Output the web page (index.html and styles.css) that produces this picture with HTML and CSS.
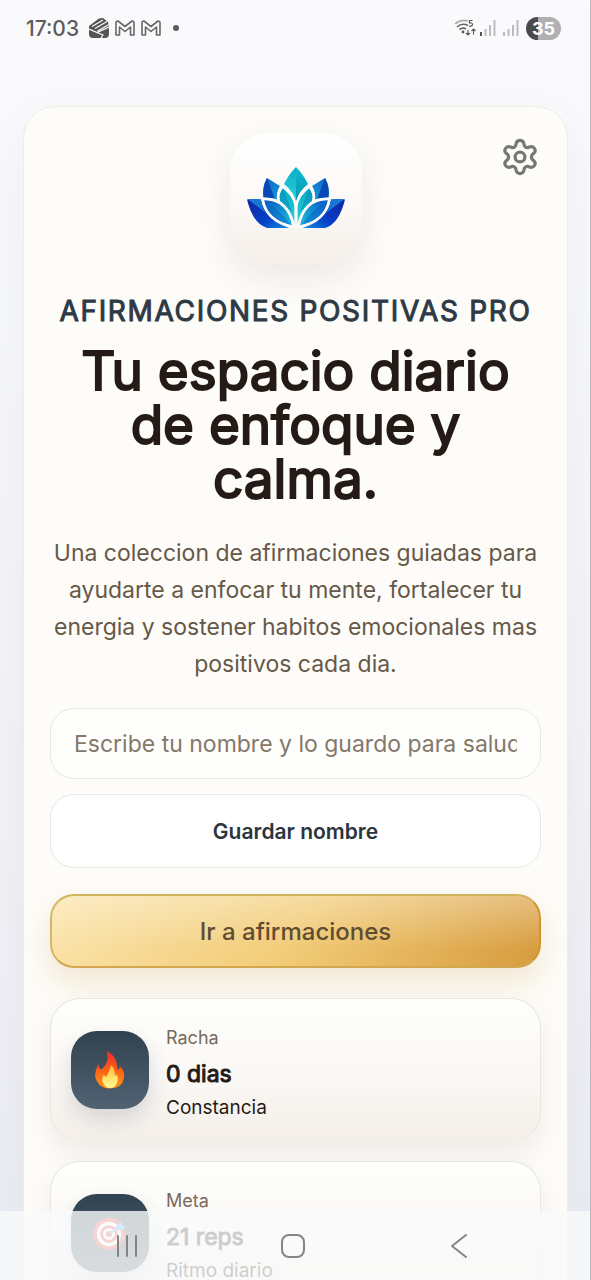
FILE: index.html
```html
<!DOCTYPE html>
<html lang="es">
<head>
<meta charset="utf-8">
<meta name="viewport" content="width=device-width, initial-scale=1">
<title>Afirmaciones Positivas Pro</title>
<link rel="stylesheet" href="styles.css">
</head>
<body>
<div class="screen">
  <header class="status">
    <div class="status-left">
      <span class="clock">17:03</span>
      <svg class="status-app" viewBox="0 0 20 20" width="20" height="20" aria-hidden="true">
        <path fill="#555" d="M0 8 10 0.500 14 0 19 4 20 8V16Q20 20 16 20H4Q0 20 0 16Z"/>
        <path fill="none" stroke="#fafafc" stroke-width="1.200" d="M3 8.500 14 2M6 10.500 18 3.500M8.500 13 20 6.500M0 11 8 14.500 20 9M8 14.500 14 17 12 20"/>
      </svg>
      <svg viewBox="0 0 20 16" width="20" height="16" aria-hidden="true"><path class="mail" d="M1 15V3Q1 1 3 1L10 6.500 17 1Q19 1 19 3V15H15.500V7L10 11.500 4.500 7V15Z"/></svg>
      <svg viewBox="0 0 20 16" width="20" height="16" aria-hidden="true"><path class="mail" d="M1 15V3Q1 1 3 1L10 6.500 17 1Q19 1 19 3V15H15.500V7L10 11.500 4.500 7V15Z"/></svg>
      <span class="dot"></span>
    </div>
    <div class="status-right">
      <svg class="wifi" viewBox="0 0 22 18" width="22" height="18" aria-hidden="true">
        <path fill="none" stroke="#aaa" stroke-width="1.600" d="M1 5Q7 0 14 2"/>
        <path fill="none" stroke="#666" stroke-width="1.600" d="M3 8Q8 3.500 14 6.500M5.500 10.500Q9 8 12 10"/>
        <circle cx="9" cy="13" r="1.400" fill="#555"/>
        <path fill="none" stroke="#555" stroke-width="1.100" d="M18.500 1.500H15.500V4Q18.500 3.500 18.500 5.500T15 7M14 11V16M12 14 14 16 16 14M19.500 15.500V10M17.500 12 19.500 10 21.500 12"/>
      </svg>
      <svg viewBox="0 0 16 16" width="16" height="16" aria-hidden="true"><path fill="#555" d="M0 12h2v4H0z"/><path fill="#bcbcbe" d="M4.500 9h2v7h-2zM9 5h2v11H9zM13.500 0h2v16h-2z"/></svg>
      <svg viewBox="0 0 16 16" width="16" height="16" aria-hidden="true"><path fill="#bcbcbe" d="M0 12h2v4H0zM4.500 9h2v7h-2zM9 5h2v11H9zM13.500 0h2v16h-2z"/></svg>
      <span class="battery">35</span>
    </div>
  </header>

  <main class="content">
    <section class="panel">
      <button class="settings" type="button" aria-label="Ajustes">
        <svg viewBox="0 0 36 40" width="34" height="38" aria-hidden="true" fill="none" stroke="#777775" stroke-width="3.400" stroke-linejoin="round">
          <path d="M14 5.500Q14.800 2.500 18 2.500T22 5.500L22.600 8Q24 10.500 27 9.800L29 9.200Q32 8.600 33.500 11.200 35 14 32.600 16L31 17.500Q29.200 20 31 22.500L32.600 24Q35 26 33.500 28.800 32 31.400 29 30.800L27 30.200Q24 29.500 22.600 32L22 34.500Q21.200 37.500 18 37.500T14 34.500L13.400 32Q12 29.500 9 30.200L7 30.800Q4 31.400 2.500 28.800 1 26 3.400 24L5 22.500Q6.800 20 5 17.500L3.400 16Q1 14 2.500 11.200 4 8.600 7 9.200L9 9.800Q12 10.500 13.400 8Z"/>
          <circle cx="18" cy="20" r="5.200"/>
        </svg>
      </button>

      <div class="logo">
        <svg viewBox="0 0 98 62" width="98" height="62" role="img" aria-label="Flor de loto">
          <defs>
            <linearGradient id="mid" x1="0" y1="0" x2="0" y2="1"><stop offset="0" stop-color="#0cadc4"/><stop offset="1" stop-color="#2ad3dc"/></linearGradient>
            <linearGradient id="midDark" x1="0" y1="0" x2="0" y2="1"><stop offset="0" stop-color="#10bfd0"/><stop offset="1" stop-color="#0590b0"/></linearGradient>
            <linearGradient id="side" x1="0" y1="0" x2="1" y2="1"><stop offset="0" stop-color="#1359c8"/><stop offset="1" stop-color="#12a0d4"/></linearGradient>
            <linearGradient id="low" x1="0" y1="0" x2="1" y2="1"><stop offset="0" stop-color="#0756c5"/><stop offset="1" stop-color="#20c8dc"/></linearGradient>
            <linearGradient id="outer" x1="0" y1="0" x2="1" y2="1"><stop offset="0" stop-color="#1023a0"/><stop offset=".6" stop-color="#0641c8"/><stop offset="1" stop-color="#1590e0"/></linearGradient>
            <g id="half">
              <path fill="url(#outer)" d="M0 32.500Q8 31.500 14 32.500 17 50 42 61H20Q6 57 0 32.500Z"/>
              <path fill="#1778d4" d="M1 32.500Q8 31.500 14 32.500 14.500 39 19 46Z"/>
              <path fill="url(#side)" d="M20 11 33 19Q29 26 30 32.500 24 30 16.500 30.500 15 20 20 11Z"/>
              <path fill="#0748b4" d="M20 11 27.500 31.500Q22 30 16.500 30.500 15 20 20 11Z"/>
              <path fill="url(#mid)" d="M36 21Q47 30 47.500 38V57Q44 42 33 34 31 28 36 21Z"/>
              <path fill="#0788b8" opacity=".55" d="M36 21 45 45Q39 38 33 34 31 28 36 21Z"/>
              <path fill="url(#low)" d="M17 33Q41 33 45.500 60 21 54 17 33Z"/>
              <path fill="#0862c8" opacity=".5" d="M17 33Q33 43 45.500 60 21 54 17 33Z"/>
              <path fill="none" stroke="#fdfbf9" stroke-width="2.600" d="M15.500 31.800Q41 31 47 60Q19 55 15.500 31.800"/>
              <path fill="none" stroke="#fdfbf9" stroke-width="2.400" d="M34.500 19Q47 27 49 40V61M34.500 19Q30 26 31.500 34"/>
            </g>
          </defs>
          <path fill="url(#mid)" d="M49 0Q42 7 37 17 47 25 49 35Z"/>
          <path fill="url(#midDark)" d="M49 0Q56 7 61 17 51 25 49 35Z"/>
          <use href="#half"/>
          <use href="#half" transform="translate(98 0) scale(-1 1)"/>
        </svg>
      </div>

      <p class="eyebrow">AFIRMACIONES POSITIVAS PRO</p>
      <h1 class="title">Tu espacio diario de enfoque y calma.</h1>
      <p class="lead">Una coleccion de afirmaciones guiadas para ayudarte a enfocar tu mente, fortalecer tu energia y sostener habitos emocionales mas positivos cada dia.</p>

      <form class="name-form">
        <input class="name-input" type="text" aria-label="Tu nombre" placeholder="Escribe tu nombre y lo guardo para saludarte">
        <button class="button button-plain" type="button">Guardar nombre</button>
      </form>
      <button class="button button-gold" type="button">Ir a afirmaciones</button>

      <div class="stats">
        <article class="stat">
          <div class="tile">
            <svg viewBox="0 0 30 38" width="30" height="38" aria-hidden="true">
              <defs>
                <linearGradient id="fire" x1="0" y1="0" x2="0" y2="1"><stop offset="0" stop-color="#ef2b31"/><stop offset=".5" stop-color="#fb6015"/><stop offset="1" stop-color="#ff9516"/></linearGradient>
                <linearGradient id="core" x1="0" y1="0" x2="0" y2="1"><stop offset="0" stop-color="#ffb53a"/><stop offset=".6" stop-color="#ffe76b"/><stop offset="1" stop-color="#fff79d"/></linearGradient>
              </defs>
              <path fill="url(#fire)" d="M11.500 0Q22 4 22.500 19 24.500 18 25 15.500 30 20 29 27 27 37.500 15 37.500T0 25Q0 19 3.500 13 3.500 17 6 18.500 9 17 11 13 14 7 11.500 0Z"/>
              <path fill="url(#core)" d="M16 14Q20 17 20 25 21.500 24.500 21.500 23 24 27 22 32 20 37 15 37T7.500 31Q6.500 27 9 23.500 10 26 11 26 14 22 16 14Z"/>
            </svg>
          </div>
          <div class="stat-text">
            <span class="stat-label">Racha</span>
            <strong class="stat-value">0 dias</strong>
            <span class="stat-note">Constancia</span>
          </div>
        </article>
        <article class="stat">
          <div class="tile">
            <svg viewBox="0 0 36 36" width="36" height="36" aria-hidden="true">
              <circle cx="17" cy="19" r="16" fill="#ee3e3e"/>
              <circle cx="17" cy="19" r="10.500" fill="none" stroke="#fff" stroke-width="3.500"/>
              <circle cx="17" cy="19" r="4.500" fill="none" stroke="#fff" stroke-width="3"/>
              <path stroke="#55a9ec" stroke-width="2" d="M17 19 29 11"/>
              <path fill="#48a5f4" d="M23 12 29 7 30 10 34 11 29 16 25 15Z"/>
            </svg>
          </div>
          <div class="stat-text">
            <span class="stat-label">Meta</span>
            <strong class="stat-value">21 reps</strong>
            <span class="stat-note">Ritmo diario</span>
          </div>
        </article>
      </div>
    </section>
  </main>

  <nav class="system-nav" aria-label="Sistema">
    <button type="button" aria-label="Recientes"><svg viewBox="0 0 24 24" width="24" height="24"><path d="M3 2V22M12 2V22M21 2V22"/></svg></button>
    <button type="button" aria-label="Inicio"><svg viewBox="0 0 24 24" width="24" height="24"><rect x="1" y="1" width="22" height="22" rx="7"/></svg></button>
    <button type="button" aria-label="Atrás"><svg viewBox="0 0 24 24" width="24" height="24"><path d="M19 1 5 12 19 23"/></svg></button>
  </nav>
</div>
</body>
</html>
```
FILE: styles.css
```css
* {
  box-sizing: border-box;
}

body {
  margin: 0;
  font-family: Inter, "Liberation Sans", sans-serif;
  color: #241b17;
}

button,
input {
  font: inherit;
}

.screen {
  position: relative;
  height: 100vh;
  overflow: hidden;
  border-right: 1px solid #b9b9c0;
  background: linear-gradient(180deg, #fafafc 0%, #f7f8fb 25%, #f2f2f7 60%, #ebecf3 100%);
}

.status {
  display: flex;
  align-items: center;
  justify-content: space-between;
  height: 56px;
  padding: 0 29px 0 26px;
}

.status-left,
.status-right {
  display: flex;
  align-items: center;
}

.status-left {
  gap: 6px;
}

.status-right {
  gap: 7px;
}

.wifi {
  margin-right: -3px;
}

.clock {
  margin-right: 4px;
  font-size: 21px;
  font-weight: 500;
  color: #5c5c5e;
}

.mail {
  fill: none;
  stroke: #68686a;
  stroke-width: 1.6;
  stroke-linejoin: round;
}

.dot {
  width: 6px;
  height: 6px;
  margin-left: 6px;
  border-radius: 50%;
  background: #5c5c5e;
}

.battery {
  width: 35px;
  border-radius: 12px;
  background: linear-gradient(90deg, #4b4b4d 34%, #b0b0b2 34%);
  color: #fff;
  font-size: 18px;
  font-weight: 700;
  line-height: 23px;
  text-align: center;
}

.content {
  padding: 50px 22px 0 23px;
}

.panel {
  position: relative;
  padding: 26px;
  border: 1px solid #eeece8;
  border-radius: 32px;
  background: #fdfcf8;
  box-shadow: 0 20px 50px rgba(90, 95, 130, 0.07);
  text-align: center;
}

.settings {
  position: absolute;
  top: 31px;
  right: 30px;
  padding: 0;
  border: 0;
  background: none;
}

.settings svg {
  display: block;
}

.logo {
  display: grid;
  place-items: center;
  width: 132px;
  height: 132px;
  margin: 0 auto;
  padding-bottom: 2px;
  border-radius: 38px;
  background: linear-gradient(180deg, #ffffff 0%, #fcfaf8 50%, #f5eee8 100%);
  box-shadow: 0 14px 36px rgba(70, 60, 50, 0.09);
}

.eyebrow,
.title,
.stat-value {
  font-weight: 400;
  -webkit-text-stroke: 1px currentColor;
}

.eyebrow {
  margin: 28px 0 0;
  color: #2d3a46;
  font-size: 28px;
  line-height: 36px;
  letter-spacing: 0.06em;
  white-space: nowrap;
}

.title {
  margin: 15px 0 0;
  font-size: 53px;
  line-height: 54px;
  -webkit-text-stroke-width: 2px;
}

.lead {
  margin: 29px 0 0;
  color: #665848;
  font-size: 23px;
  line-height: 37px;
}

.name-form {
  display: grid;
  gap: 15px;
  margin-top: 25px;
}

.name-input,
.button {
  width: 100%;
  border: 1px solid #e7e8e8;
  border-radius: 24px;
  background: #fefefd;
}

.name-input {
  height: 71px;
  padding: 0 23px;
  font-size: 23px;
}

.name-input::placeholder {
  color: #847869;
  opacity: 1;
}

.button {
  height: 74px;
  padding: 0;
}

.button-plain {
  background: #fff;
  color: #2b353d;
  font-size: 21px;
  font-weight: 600;
}

.button-gold {
  margin-top: 26px;
  border: 2px solid;
  border-color: #d3b35b #d1952f #d2a74e #d7b767;
  background:
    linear-gradient(180deg, rgba(255, 255, 255, 0.3), rgba(255, 255, 255, 0) 75%),
    linear-gradient(120deg, #fbe4ac 0%, #f2cc78 50%, #d79b3e 100%);
  box-shadow: 0 14px 30px rgba(200, 145, 60, 0.2);
  color: #5f4d32;
  font-size: 24px;
  font-weight: 500;
}

.stats {
  display: grid;
  gap: 19px;
  margin-top: 30px;
}

.stat {
  display: flex;
  align-items: center;
  gap: 17px;
  min-height: 144px;
  padding: 18px 20px;
  border: 1px solid #e9e5df;
  border-bottom-color: #f2ece6;
  border-radius: 30px;
  background: linear-gradient(180deg, #fefefc 0%, #faf8f5 55%, #f4eee8 100%);
  box-shadow: 0 12px 26px rgba(80, 75, 65, 0.09);
  text-align: left;
}

.tile {
  display: grid;
  place-items: center;
  flex: none;
  width: 78px;
  height: 78px;
  border-radius: 26px;
  background: linear-gradient(180deg, #30424f, #516273);
  box-shadow: 0 10px 20px rgba(50, 65, 85, 0.16);
}

.stat-text {
  display: grid;
  padding-top: 4px;
}

.stat-label {
  color: #78695b;
  font-size: 18px;
  line-height: 34px;
}

.stat-value {
  font-size: 23px;
  line-height: 38px;
}

.stat-note {
  font-size: 19px;
  line-height: 30px;
}

.system-nav {
  position: absolute;
  inset: auto 0 0;
  display: grid;
  grid-template-columns: repeat(3, 166px);
  justify-content: center;
  height: 69px;
  padding-right: 5px;
  background: rgba(249, 250, 250, 0.8);
}

.system-nav button {
  display: grid;
  place-items: center;
  padding: 0;
  border: 0;
  background: none;
}

.system-nav svg {
  fill: none;
  stroke: #858585;
  stroke-width: 2;
  stroke-linecap: round;
  stroke-linejoin: round;
}
```
